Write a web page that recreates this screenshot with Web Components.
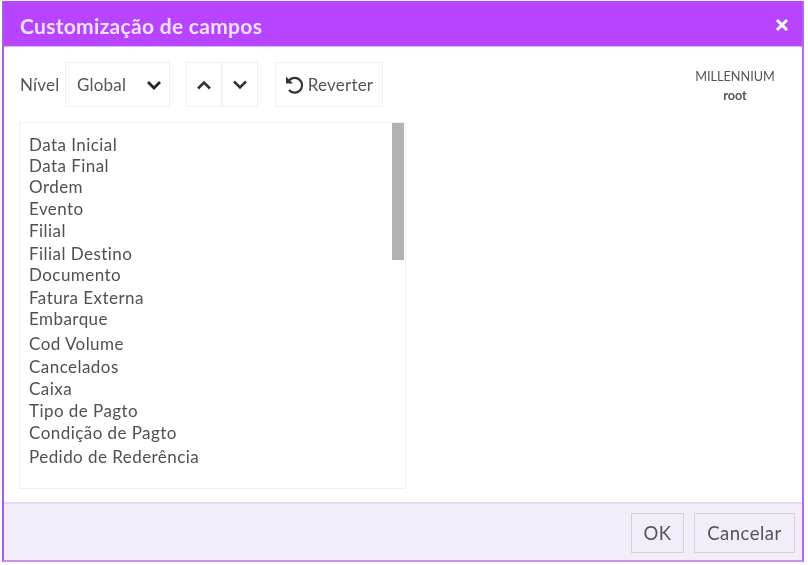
<!DOCTYPE html>
<html lang="pt">
<head>
<meta charset="utf-8">
<style>
  html, body { margin: 0; background: #fff; }
  body { padding: 1px 0 0 2px; font-family: Lato, "Open Sans", sans-serif; }
</style>
</head>
<body>
<custom-dialog heading="Customização de campos">
  <dialog-toolbar></dialog-toolbar>
  <field-list>
    <field-row>Data Inicial</field-row>
    <field-row gap="0">Data Final</field-row>
    <field-row gap="0">Ordem</field-row>
    <field-row gap="1">Evento</field-row>
    <field-row gap="1">Filial</field-row>
    <field-row gap="2">Filial Destino</field-row>
    <field-row gap="0">Documento</field-row>
    <field-row gap="2">Fatura Externa</field-row>
    <field-row gap="0">Embarque</field-row>
    <field-row gap="4">Cod Volume</field-row>
    <field-row gap="2">Cancelados</field-row>
    <field-row gap="1">Caixa</field-row>
    <field-row gap="1">Tipo de Pagto</field-row>
    <field-row gap="1">Condição de Pagto</field-row>
    <field-row gap="3">Pedido de Rederência</field-row>
  </field-list>
  <action-button slot="footer" style="width:53px">OK</action-button>
  <action-button slot="footer" style="width:101px">Cancelar</action-button>
</custom-dialog>

<script>
const dialogTemplate = document.createElement('template')
dialogTemplate.innerHTML = `
  <style>
    :host {
      display: flex;
      flex-direction: column;
      box-sizing: border-box;
      width: 802px;
      height: 561px;
      border-left: 2px solid #a860dc;
      border-right: 2px solid #b36ae8;
      border-bottom: 2px solid #c98ff2;
      background: #fff;
      color: #444;
      filter: blur(0.75px);
    }
    header {
      display: flex;
      align-items: center;
      justify-content: space-between;
      box-sizing: border-box;
      height: 46px;
      padding: 3px 13px 0 16px;
      background: #b744ff;
      border-bottom: 1px solid #dcb4fa;
      color: #f3e2ff;
      font-size: 21px;
      font-weight: 700;
      letter-spacing: 0.3px;
      flex: none;
    }
    header svg { display: block; }
    main { flex: 1; min-height: 0; padding: 15px 15px 0 15px; }
    footer {
      flex: none;
      display: flex;
      justify-content: flex-end;
      gap: 10px;
      box-sizing: border-box;
      height: 58px;
      padding: 9px 7px 0 0;
      background: #f3ecf9;
      border-top: 2px solid #e9d7f8;
    }
  </style>
  <header>
    <span id="title"></span>
    <svg width="14" height="14" viewBox="0 0 14 14"><path d="M2 2 12 12M12 2 2 12" stroke="#fff" stroke-width="3" fill="none"/></svg>
  </header>
  <main><slot></slot></main>
  <footer><slot name="footer"></slot></footer>
`

class CustomDialog extends HTMLElement {
  constructor() {
    super()
    this.attachShadow({ mode: 'open' })
    this.shadowRoot.appendChild(dialogTemplate.content.cloneNode(true))
    this.shadowRoot.querySelector('#title').textContent = this.getAttribute('heading')
  }
}

const toolbarTemplate = document.createElement('template')
toolbarTemplate.innerHTML = `
  <style>
    :host {
      display: flex;
      align-items: stretch;
      height: 45px;
      font-size: 17px;
      letter-spacing: 0.2px;
      color: #555;
    }
    label { align-self: center; width: 46px; flex: none; padding-left: 1px; box-sizing: border-box; }
    .box {
      box-sizing: border-box;
      display: flex;
      align-items: center;
      border: 1px solid #f2eef6;
      background: #fff;
    }
    .select { width: 105px; padding: 0 7px 0 11px; justify-content: space-between; }
    .up { width: 36px; justify-content: center; margin-left: 16px; }
    .down { width: 36px; justify-content: center; }
    .revert { width: 108px; justify-content: center; gap: 3px; margin-left: 17px; }
    .info {
      margin-left: auto;
      width: 104px;
      align-self: flex-start;
      margin-top: 5px;
      text-align: center;
      font-size: 12.7px;
      line-height: 19px;
      letter-spacing: 0;
      color: #555;
    }
    .info b { display: block; font-weight: 700; }
    svg { display: block; }
  </style>
  <label>Nível</label>
  <div class="box select">
    <span>Global</span>
    <svg width="16" height="10" viewBox="0 0 16 10"><path d="M2 2 8 8 14 2" stroke="#222" stroke-width="2.8" fill="none"/></svg>
  </div>
  <div class="box up">
    <svg width="16" height="10" viewBox="0 0 16 10"><path d="M2 8.5 8 2.5 14 8.5" stroke="#333" stroke-width="2.6" fill="none"/></svg>
  </div>
  <div class="box down">
    <svg width="16" height="10" viewBox="0 0 16 10"><path d="M2 1.5 8 7.5 14 1.5" stroke="#333" stroke-width="2.6" fill="none"/></svg>
  </div>
  <div class="box revert">
    <svg width="20" height="20" viewBox="0 0 20 20"><path d="M4 5.5A7.4 7.4 0 1 1 4 15" stroke="#333" stroke-width="2.2" fill="none"/><path d="M1 1.5V8.5H8Z" fill="#333"/></svg>
    <span>Reverter</span>
  </div>
  <div class="info">MILLENNIUM<b>root</b></div>
`

class DialogToolbar extends HTMLElement {
  constructor() {
    super()
    this.attachShadow({ mode: 'open' })
    this.shadowRoot.appendChild(toolbarTemplate.content.cloneNode(true))
  }
}

const listTemplate = document.createElement('template')
listTemplate.innerHTML = `
  <style>
    :host {
      display: block;
      position: relative;
      box-sizing: border-box;
      width: 387px;
      height: 367px;
      margin-top: 15px;
      padding: 11px 9px;
      border: 1px solid #f1eef6;
      overflow: hidden;
    }
    .thumb {
      position: absolute;
      top: 0;
      right: 1px;
      width: 12px;
      height: 137px;
      background: #b2b2b2;
    }
  </style>
  <slot></slot>
  <div class="thumb"></div>
`

class FieldList extends HTMLElement {
  constructor() {
    super()
    this.attachShadow({ mode: 'open' })
    this.shadowRoot.appendChild(listTemplate.content.cloneNode(true))
  }
}

class FieldRow extends HTMLElement {
  constructor() {
    super()
    this.attachShadow({ mode: 'open' })
    this.shadowRoot.innerHTML = `
      <style>
        :host {
          display: block;
          height: 21px;
          line-height: 21px;
          font-size: 17px;
          letter-spacing: 0.45px;
          color: #505050;
          white-space: nowrap;
        }
      </style>
      <slot></slot>
    `
  }

  connectedCallback() {
    // rows in the reference are not evenly spaced
    this.style.marginTop = (this.getAttribute('gap') || 0) + 'px'
  }
}

class ActionButton extends HTMLElement {
  constructor() {
    super()
    this.attachShadow({ mode: 'open' })
    this.shadowRoot.innerHTML = `
      <style>
        :host {
          display: flex;
          align-items: center;
          justify-content: center;
          box-sizing: border-box;
          height: 40px;
          border: 1px solid #d6d0db;
          background: #f3ecf9;
          color: #555;
          font-size: 18.5px;
          letter-spacing: 0.5px;
        }
      </style>
      <slot></slot>
    `
  }
}

customElements.define('custom-dialog', CustomDialog)
customElements.define('dialog-toolbar', DialogToolbar)
customElements.define('field-list', FieldList)
customElements.define('field-row', FieldRow)
customElements.define('action-button', ActionButton)
</script>
</body>
</html>
